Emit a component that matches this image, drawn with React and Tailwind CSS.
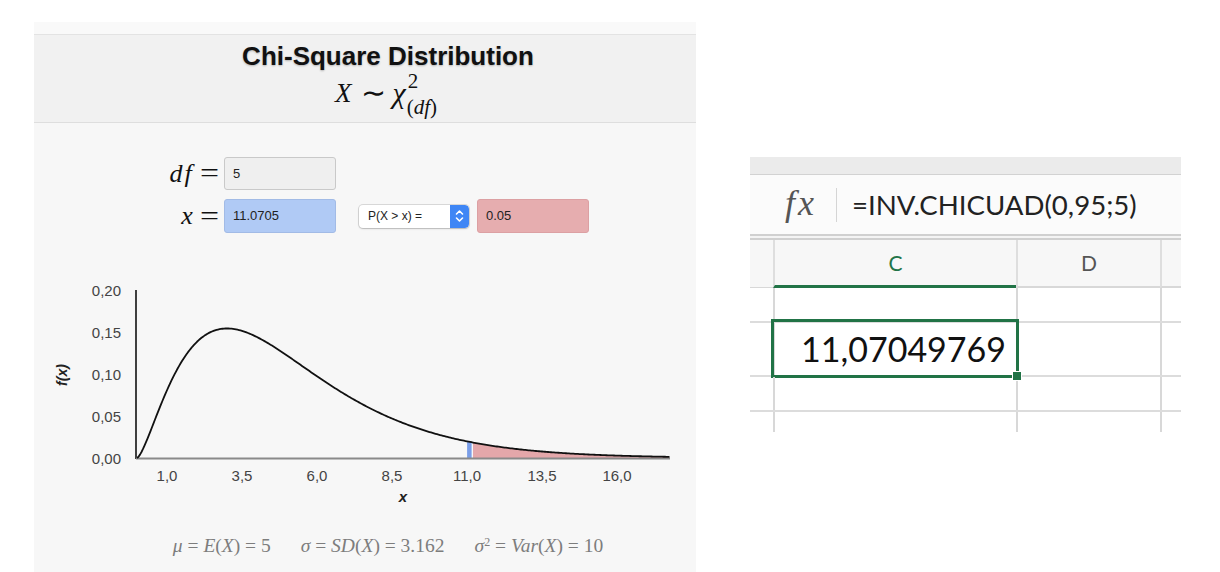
const serif = "font-['Liberation_Serif',serif]";
const sans = "font-['Liberation_Sans',Arial,sans-serif]";
const lato = "font-['Lato','Open_Sans',sans-serif]";

// chi-square density, df = 5
const pdf = (x) => (x <= 0 ? 0 : 0.13298 * Math.pow(x, 1.5) * Math.exp(-x / 2));
const X0 = 103;
const Y0 = 178;
const px = (x) => X0 + 30 * x;
const py = (y) => Y0 - 840 * y;
const XMAX = 17.75;
const CUT = 11.0705;

function curvePath(from, to) {
  const pts = [];
  for (let x = from; x <= to + 1e-9; x += 0.05) pts.push(`${px(x).toFixed(2)},${py(pdf(x)).toFixed(2)}`);
  return pts;
}

function Chart() {
  const line = 'M' + curvePath(0, XMAX).join(' L');
  const tail = `M${px(CUT + 0.13)},${Y0} L` + curvePath(CUT + 0.13, XMAX).join(' L') + ` L${px(XMAX)},${Y0} Z`;
  const yTicks = ['0,20', '0,15', '0,10', '0,05', '0,00'];
  const xTicks = [
    [1, '1,0'], [3.5, '3,5'], [6, '6,0'], [8.5, '8,5'], [11, '11,0'], [13.5, '13,5'], [16, '16,0'],
  ];
  const ff = 'Liberation Sans, Arial, sans-serif';
  return (
    <svg width="662" height="230" className="block">
      <path d={tail} fill="#e4a7aa" />
      <rect x={px(CUT) - 2} y={py(pdf(CUT))} width="4.5" height={Y0 - py(pdf(CUT))} fill="#7a9ee8" />
      <line x1="102" y1="10" x2="102" y2="179" stroke="#111" strokeWidth="1.6" />
      <line x1="102" y1="178.5" x2="636" y2="178.5" stroke="#8a8a8a" strokeWidth="2" />
      <path d={line} fill="none" stroke="#111" strokeWidth="1.8" strokeLinejoin="round" />
      {yTicks.map((t, i) => (
        <text key={t} x="87" y={10 + i * 42 + 5.5} textAnchor="end" fontSize="15" fill="#444" fontFamily={ff}>
          {t}
        </text>
      ))}
      {xTicks.map(([v, t]) => (
        <text key={t} x={px(v)} y="200.5" textAnchor="middle" fontSize="15" fill="#444" fontFamily={ff}>
          {t}
        </text>
      ))}
      <text x="369" y="222" textAnchor="middle" fontSize="15" fontWeight="bold" fontStyle="italic" fill="#222" fontFamily={ff}>
        x
      </text>
      <text x="0" y="0" transform="translate(33 95) rotate(-90)" textAnchor="middle" fontSize="14" fontWeight="bold" fontStyle="italic" fill="#222" fontFamily={ff}>
        f(x)
      </text>
    </svg>
  );
}

function ChiPanel() {
  return (
    <div className="w-[662px] h-[550px] mt-[22px] ml-[34px] bg-[#f7f7f7] flex flex-col">
      <div className="h-[13px] bg-[#f9f9f9] border-b border-[#e3e3e3]" />
      <div className="h-[88px] bg-[#f1f1f1] border-b border-[#dedede] flex flex-col items-center pt-[7px] pl-[46px]">
        <div className={`${sans} text-[26px] leading-[28px] font-bold text-[#111] [text-shadow:0_1px_2px_rgba(0,0,0,0.25)]`}>
          Chi-Square Distribution
        </div>
        <div className={`${serif} text-[27px] leading-[30px] text-[#111] flex items-center h-[44px] mt-[1px] -ml-[4px]`}>
          <span className="italic">X</span>
          <span className="ml-[10px] text-[30px]">∼</span>
          <span className="ml-[6px] italic text-[30px]">χ</span>
          <span className="flex flex-col text-[21px] leading-[16px] gap-[12px] ml-[2px]">
            <span className="mt-[2px]">2</span>
            <span className="-ml-[1px] -mt-[2px]">
              (<span className="italic">df</span>)
            </span>
          </span>
        </div>
      </div>

      <div className="mt-[34px] flex flex-col gap-[9px]">
        <div className="flex items-center">
          <div className={`${serif} w-[183px] flex justify-end items-center text-[26px] text-[#111] leading-none`}>
            <span className="italic tracking-[2px]">df</span>
            <span className="ml-[8px] text-[27px] scale-x-125">=</span>
          </div>
          <div className={`${sans} ml-[7px] w-[112px] h-[33px] bg-[#efefef] border border-[#c9c9c9] rounded-[3px] flex items-center pl-[8px] text-[13px] text-[#222]`}>
            5
          </div>
        </div>
        <div className="flex items-center">
          <div className={`${serif} w-[183px] flex justify-end items-center text-[26px] text-[#111] leading-none`}>
            <span className="italic">x</span>
            <span className="ml-[9px] text-[27px] scale-x-125">=</span>
          </div>
          <div className={`${sans} ml-[7px] w-[112px] h-[34px] bg-[#b0caf5] border border-[#a2bbe6] rounded-[3px] flex items-center pl-[8px] text-[13px] text-[#222]`}>
            11.0705
          </div>
          <div className={`${sans} ml-[23px] w-[110px] h-[23px] bg-white rounded-[4px] shadow-[0_0_0_1px_rgba(0,0,0,0.12),0_1px_2px_rgba(0,0,0,0.15)] flex items-center overflow-hidden`}>
            <span className="flex-1 pl-[9px] text-[12px] text-[#222]">P(X &gt; x) =</span>
            <span className="w-[19px] h-full bg-[#3f86f5] rounded-r-[4px] flex items-center justify-center">
              <svg width="9" height="14" viewBox="0 0 9 14" fill="none" stroke="white" strokeWidth="1.6" strokeLinecap="round" strokeLinejoin="round">
                <path d="M1.5 5 L4.5 2 L7.5 5" />
                <path d="M1.5 9 L4.5 12 L7.5 9" />
              </svg>
            </span>
          </div>
          <div className={`${sans} ml-[8px] w-[112px] h-[34px] bg-[#e6adaf] border border-[#dca0a3] rounded-[3px] flex items-center pl-[8px] text-[13px] text-[#222]`}>
            0.05
          </div>
        </div>
      </div>

      <div className="mt-[47px]">
        <Chart />
      </div>

      <div className={`${serif} mt-[25px] pl-[46px] flex justify-center gap-[30px] text-[19.5px] leading-[22px] text-[#7d7d7d] whitespace-nowrap`}>
        <span>
          <span className="italic">μ</span> = <span className="italic">E</span>(<span className="italic">X</span>) = 5
        </span>
        <span>
          <span className="italic">σ</span> = <span className="italic">SD</span>(<span className="italic">X</span>) = 3.162
        </span>
        <span>
          <span className="italic">σ</span>
          <sup className="text-[12px]">2</sup> = <span className="italic">Var</span>(<span className="italic">X</span>) = 10
        </span>
      </div>
    </div>
  );
}

function Row({ h, last, children }) {
  return (
    <div className={`flex ${h} ${last ? '' : 'border-b-2 border-[#dcdcdc]'}`}>
      <div className="w-[23px]" />
      <div className="w-[243px] border-l-2 border-[#d8d8d8] relative">{children}</div>
      <div className="w-[144px] border-l-2 border-[#d8d8d8]" />
      <div className="w-[21px] border-l-2 border-[#d8d8d8]" />
    </div>
  );
}

function ExcelPanel() {
  return (
    <div className="w-[431px] mt-[157px] ml-[54px] flex flex-col">
      <div className="h-[18px] bg-[#ebebeb] border-b border-[#d2d2d2]" />
      <div className="h-[59px] bg-[#fbfbfb] flex items-center">
        <span className={`${serif} italic text-[36px] tracking-[3px] text-[#555] ml-[35px] w-[36px] leading-none -mt-[4px]`}>fx</span>
        <span className="ml-[15px] w-[1px] h-[34px] bg-[#d5d5d5]" />
        <span className={`${lato} ml-[15px] text-[27.6px] text-[#222] leading-none`}>=INV.CHICUAD(0,95;5)</span>
      </div>
      <div className="h-[6px] border-y-2 border-[#d0d0d0] bg-[#f4f4f4]" />
      <div className="flex h-[48px] bg-[#f7f7f7]">
        <div className="w-[23px] border-b border-[#d8d8d8]" />
        <div className={`${lato} w-[243px] border-l-2 border-[#dedede] border-b-[3px] border-b-[#227447] flex items-center justify-center text-[21px] text-[#227447]`}>
          C
        </div>
        <div className={`${lato} w-[144px] border-l-2 border-[#dedede] border-b-2 border-b-[#d8d8d8] flex items-center justify-center text-[21px] text-[#555]`}>
          D
        </div>
        <div className="w-[21px] border-l-2 border-[#dedede] border-b-2 border-b-[#d8d8d8]" />
      </div>
      <div className="bg-white">
        <Row h="h-[35px]" />
        <Row h="h-[54px]">
          <div className="absolute -left-[4px] -top-[4px] w-[248px] h-[59px] border-[3px] border-[#217346] flex items-center justify-end pr-[10px]">
            <span className={`${lato} text-[34px] text-[#111] leading-none`}>11,07049769</span>
            <span className="absolute -right-[6px] -bottom-[6px] w-[10px] h-[10px] bg-[#217346] border border-white" />
          </div>
        </Row>
        <Row h="h-[35px]" />
        <Row h="h-[20px]" last />
      </div>
    </div>
  );
}

export default function App() {
  return (
    <div className="w-[1220px] h-[572px] bg-white flex items-start overflow-hidden">
      <ChiPanel />
      <ExcelPanel />
    </div>
  );
}
